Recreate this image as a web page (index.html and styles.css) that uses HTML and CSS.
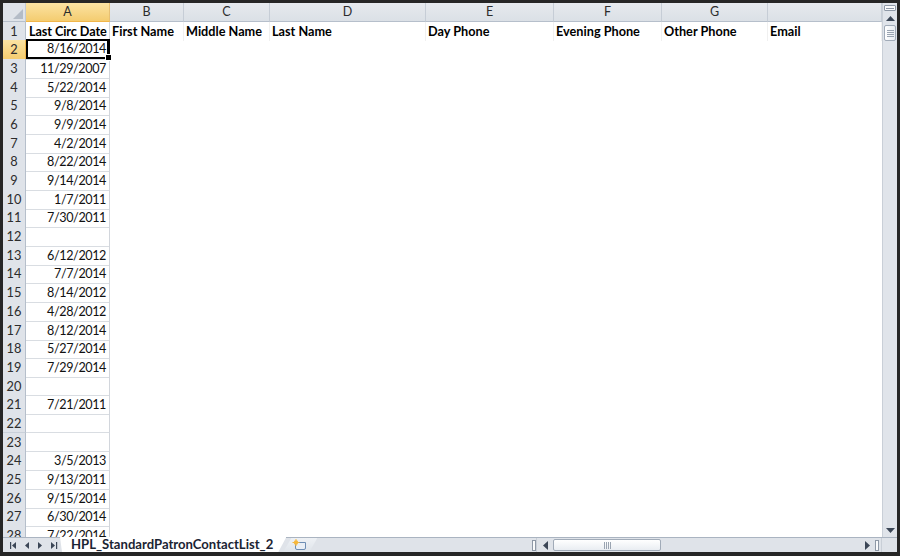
FILE: index.html
```html
<!DOCTYPE html>
<html>
<head>
<meta charset="utf-8">
<title>HPL_StandardPatronContactList_2</title>
<link rel="stylesheet" href="styles.css">
</head>
<body>
<div class="window">
  <div class="main">
    <div class="sheet">
      <div class="row colhead">
        <div class="corner"><svg width="10" height="10" viewBox="0 0 10 10"><polygon points="10,0 10,10 0,10" fill="#b4bcc7"/></svg></div>
        <div class="ch sel">A</div>
        <div class="ch">B</div>
        <div class="ch">C</div>
        <div class="ch">D</div>
        <div class="ch">E</div>
        <div class="ch">F</div>
        <div class="ch">G</div>
        <div class="ch"></div>
      </div>
      <div class="row r1">
        <div class="rh">1</div>
        <div class="ca hdr">Last Circ Date</div>
        <div class="c1">First Name</div>
        <div class="c1">Middle Name</div>
        <div class="c1">Last Name</div>
        <div class="c1">Day Phone</div>
        <div class="c1">Evening Phone</div>
        <div class="c1">Other Phone</div>
        <div class="c1">Email</div>
      </div>
      <div class="row"><div class="rh sel">2</div><div class="ca active">8/16/2014<span class="handle"></span></div></div>
      <div class="row"><div class="rh">3</div><div class="ca">11/29/2007</div></div>
      <div class="row"><div class="rh">4</div><div class="ca">5/22/2014</div></div>
      <div class="row"><div class="rh">5</div><div class="ca">9/8/2014</div></div>
      <div class="row"><div class="rh">6</div><div class="ca">9/9/2014</div></div>
      <div class="row"><div class="rh">7</div><div class="ca">4/2/2014</div></div>
      <div class="row"><div class="rh">8</div><div class="ca">8/22/2014</div></div>
      <div class="row"><div class="rh">9</div><div class="ca">9/14/2014</div></div>
      <div class="row"><div class="rh">10</div><div class="ca">1/7/2011</div></div>
      <div class="row"><div class="rh">11</div><div class="ca">7/30/2011</div></div>
      <div class="row"><div class="rh">12</div><div class="ca"></div></div>
      <div class="row"><div class="rh">13</div><div class="ca">6/12/2012</div></div>
      <div class="row"><div class="rh">14</div><div class="ca">7/7/2014</div></div>
      <div class="row"><div class="rh">15</div><div class="ca">8/14/2012</div></div>
      <div class="row"><div class="rh">16</div><div class="ca">4/28/2012</div></div>
      <div class="row"><div class="rh">17</div><div class="ca">8/12/2014</div></div>
      <div class="row"><div class="rh">18</div><div class="ca">5/27/2014</div></div>
      <div class="row"><div class="rh">19</div><div class="ca">7/29/2014</div></div>
      <div class="row"><div class="rh">20</div><div class="ca"></div></div>
      <div class="row"><div class="rh">21</div><div class="ca">7/21/2011</div></div>
      <div class="row"><div class="rh">22</div><div class="ca"></div></div>
      <div class="row"><div class="rh">23</div><div class="ca"></div></div>
      <div class="row"><div class="rh">24</div><div class="ca">3/5/2013</div></div>
      <div class="row"><div class="rh">25</div><div class="ca">9/13/2011</div></div>
      <div class="row"><div class="rh">26</div><div class="ca">9/15/2014</div></div>
      <div class="row"><div class="rh">27</div><div class="ca">6/30/2014</div></div>
      <div class="row"><div class="rh">28</div><div class="ca">7/22/2014</div></div>
    </div>
    <div class="vscroll">
      <div class="vsplit"><span></span></div>
      <div class="vbtn"><svg width="9" height="5" viewBox="0 0 9 5"><polygon points="0,5 9,5 4.5,0" fill="#3b4656"/></svg></div>
      <div class="vthumb"><svg width="7" height="7" viewBox="0 0 7 7"><g stroke="#9aa4b1" stroke-width="1"><line x1="0" y1="0.5" x2="7" y2="0.5"/><line x1="0" y1="2.5" x2="7" y2="2.5"/><line x1="0" y1="4.5" x2="7" y2="4.5"/><line x1="0" y1="6.5" x2="7" y2="6.5"/></g></svg></div>
      <div class="vtrack"></div>
      <div class="vbtn"><svg width="9" height="5" viewBox="0 0 9 5"><polygon points="0,0 9,0 4.5,5" fill="#3b4656"/></svg></div>
    </div>
  </div>
  <div class="bottom">
    <div class="nav">
      <svg width="57" height="15" viewBox="0 0 57 15">
        <g fill="#3b4656">
          <rect x="7" y="4" width="1.2" height="7"/>
          <polygon points="13,4 13,11 9,7.5"/>
          <polygon points="26,4 26,11 22,7.5"/>
          <polygon points="35,4 35,11 39,7.5"/>
          <polygon points="48,4 48,11 52,7.5"/>
          <rect x="53" y="4" width="1.2" height="7"/>
        </g>
      </svg>
    </div>
    <div class="tabs">
      <div class="tab">HPL_StandardPatronContactList_2</div>
      <div class="newtab">
        <svg width="16" height="12" viewBox="0 0 16 12">
          <path d="M3.5 3.5 H13.5 V9 Q13.5 10.5 12 10.5 H5 Q3.5 10.5 3.5 9 Z" fill="#e9eef5" stroke="#6d8db4" stroke-width="1"/>
          <circle cx="4" cy="3.5" r="2.2" fill="#f6b73c"/>
          <path d="M4 0 V7 M0.5 3.5 H7.5" stroke="#f6b73c" stroke-width="1"/>
        </svg>
      </div>
    </div>
    <div class="hsplit"><span></span></div>
    <div class="hscroll">
      <div class="hbtn"><svg width="5" height="9" viewBox="0 0 5 9"><polygon points="5,0 5,9 0,4.5" fill="#3b4656"/></svg></div>
      <div class="hthumb"><svg width="7" height="7" viewBox="0 0 7 7"><g stroke="#9aa4b1" stroke-width="1"><line x1="0.5" y1="0" x2="0.5" y2="7"/><line x1="2.5" y1="0" x2="2.5" y2="7"/><line x1="4.5" y1="0" x2="4.5" y2="7"/><line x1="6.5" y1="0" x2="6.5" y2="7"/></g></svg></div>
      <div class="htrack"></div>
      <div class="hbtn"><svg width="5" height="9" viewBox="0 0 5 9"><polygon points="0,0 0,9 5,4.5" fill="#3b4656"/></svg></div>
      <div class="hsplit2"><span></span></div>
    </div>
    <div class="bcorner"></div>
  </div>
</div>
</body>
</html>
```
FILE: styles.css
```css
html, body {
  margin: 0;
  padding: 0;
  background: #262626;
}

.window {
  width: 900px;
  height: 556px;
  box-sizing: border-box;
  border: 3px solid #262626;
  border-bottom-width: 4px;
  background: #ffffff;
  display: flex;
  flex-direction: column;
  overflow: hidden;
  font-family: Lato, "Liberation Sans", sans-serif;
  color: #000;
}

.main {
  display: flex;
  flex: 1;
  min-height: 0;
}

.sheet {
  flex: 1;
  overflow: hidden;
  background: #fff;
}

.row {
  display: grid;
  grid-template-columns: 23px 84px 74px 86px 156px 128px 108px 106px 114px;
  height: 18.7px;
}

.colhead {
  height: 18.5px;
  background: #dfe3e9;
}

.corner {
  box-sizing: border-box;
  border-right: 1px solid #c3cad4;
  border-bottom: 1px solid #b6bfcb;
  display: flex;
  align-items: flex-end;
  justify-content: flex-end;
  padding: 0 2px 2px 0;
  background: #dfe3e9;
}

.ch {
  box-sizing: border-box;
  border-right: 1px solid #c6cdd6;
  border-bottom: 1px solid #b6bfcb;
  background: linear-gradient(#e6e9ee, #dbe0e6);
  font-size: 12.5px;
  color: #2c2c2c;
  text-align: center;
  line-height: 18px;
}

.ch.sel {
  background: linear-gradient(#fbe3a3, #f4cc70);
  border-bottom: 1px solid #f1b64a;
  border-right-color: #e7c073;
}

.rh {
  box-sizing: border-box;
  background: #dfe3e9;
  border-right: 1px solid #b6bfcb;
  border-bottom: 1px solid #c9d0d9;
  font-size: 12.8px;
  color: #2c2c2c;
  text-align: center;
  line-height: 18.5px;
}

.rh.sel {
  background: linear-gradient(#fbe3a3, #f4cc70);
  border-bottom-color: #e7c073;
  border-right: 1px solid #f1b64a;
}

.ca {
  position: relative;
  box-sizing: border-box;
  border-right: 1px solid #d2d6dc;
  border-bottom: 1px solid #d9dde2;
  font-size: 12.6px;
  letter-spacing: -0.4px;
  color: #111;
  text-align: right;
  padding-right: 3px;
  line-height: 19px;
  white-space: nowrap;
}

.ca.hdr {
  text-align: left;
  padding: 0 0 0 3px;
  font-size: 12.7px;
  font-weight: bold;
  letter-spacing: -0.1px;
  color: #000;
  line-height: 18px;
}

.c1 {
  box-sizing: border-box;
  border-right: 1px solid #f0f0f0;
  font-size: 12.7px;
  font-weight: bold;
  padding-left: 2px;
  line-height: 18px;
  white-space: nowrap;
  overflow: hidden;
}

.ca.active {
  box-shadow: inset 0 0 0 2px #000;
  border-right-color: #000;
  margin-top: -1px;
  line-height: 20px;
}

.handle {
  position: absolute;
  right: -3px;
  bottom: -2px;
  width: 5px;
  height: 5px;
  background: #000;
  border: 1px solid #fff;
  z-index: 2;
}

/* vertical scrollbar */
.vscroll {
  width: 15px;
  box-sizing: border-box;
  background: #e0e4ea;
  border-left: 1px solid #c9cfd7;
  display: flex;
  flex-direction: column;
  align-items: center;
}

.vsplit {
  margin-top: 2px;
  width: 12px;
  height: 6px;
  box-sizing: border-box;
  border: 1px solid #8e98a6;
  border-radius: 1px;
  background: #fafbfc;
  display: flex;
  align-items: center;
  justify-content: center;
}

.vsplit span {
  width: 8px;
  height: 1px;
  background: #8e98a6;
}

.vbtn {
  height: 14px;
  display: flex;
  align-items: center;
  justify-content: center;
}

.vthumb {
  width: 12px;
  height: 16px;
  box-sizing: border-box;
  border: 1px solid #a1abb8;
  border-radius: 2px;
  background: linear-gradient(90deg, #ffffff, #e9edf2);
  display: flex;
  align-items: center;
  justify-content: center;
}

.vtrack {
  flex: 1;
}

/* bottom bar */
.bottom {
  height: 15px;
  display: flex;
  background: #dfe3e9;
  border-top: 1px solid #aab4c1;
  box-sizing: border-box;
}

.nav {
  width: 57px;
  display: flex;
}

.tabs {
  width: 472px;
  display: flex;
  align-items: stretch;
}

.tab {
  margin-top: -1px;
  padding: 0 13px 0 11px;
  background: #ffffff;
  font-size: 13.1px;
  font-weight: bold;
  color: #1b2433;
  line-height: 14px;
  clip-path: polygon(0 0, 100% 0, calc(100% - 8px) 100%, 2px 100%);
  white-space: nowrap;
}

.newtab {
  margin-left: -3px;
  width: 34px;
  display: flex;
  align-items: center;
  justify-content: center;
  background: linear-gradient(#eef1f5, #dfe4ea);
  clip-path: polygon(0 100%, 8px 0, 100% 0, calc(100% - 8px) 100%);
}

.hsplit {
  width: 4px;
  display: flex;
  align-items: center;
}

.hsplit span, .hsplit2 span {
  display: block;
  width: 4px;
  height: 11px;
  box-sizing: border-box;
  border: 1px solid #8e98a6;
  background: #fafbfc;
}

.hscroll {
  flex: 1;
  display: flex;
  align-items: center;
  border-left: 1px solid #c9cfd7;
}

.hbtn {
  width: 16px;
  height: 100%;
  display: flex;
  align-items: center;
  justify-content: center;
}

.hthumb {
  width: 108px;
  height: 12px;
  box-sizing: border-box;
  border: 1px solid #a1abb8;
  border-radius: 2px;
  background: linear-gradient(#ffffff, #e9edf2);
  display: flex;
  align-items: center;
  justify-content: center;
}

.htrack {
  flex: 1;
}

.hsplit2 {
  width: 6px;
  display: flex;
  align-items: center;
}

.bcorner {
  width: 15px;
  background: #dfe3e9;
  border-left: 1px solid #c9cfd7;
}
```
